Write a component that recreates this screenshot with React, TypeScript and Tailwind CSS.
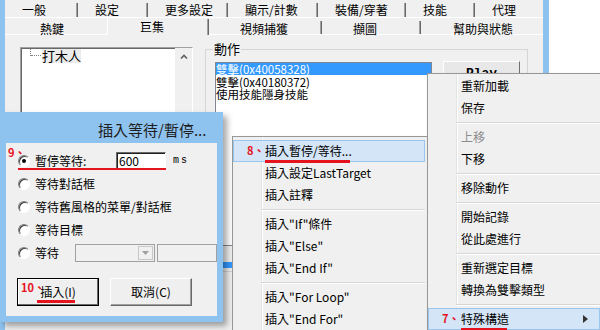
import React from 'react';

type MenuItem = { t?: string; sep?: boolean; hl?: boolean; mark?: string; dis?: boolean; sub?: boolean };

const topTabs = [
  { t: '一般', c: 'w-[73px]', sep: true },
  { t: '設定', c: 'w-[70px]', sep: true },
  { t: '更多設定', c: 'w-[80px]', sep: true },
  { t: '顯示/計數', c: 'w-[90px]', sep: true },
  { t: '裝備/穿著', c: 'w-[88px]', sep: true },
  { t: '技能', c: 'w-[69px]', sep: true },
  { t: '代理', c: 'w-[68px]', sep: false },
];

const bottomTabs = [
  { t: '熱鍵', c: 'w-[102px] pl-[35px] pt-[3px] border-b border-white', sep: false },
  { t: '巨集', c: 'w-[102px] pl-[32px] pt-[1px] border-l border-white', sep: true },
  { t: '視頻捕獲', c: 'w-[113px] pl-[31px] pt-[3px] border-b border-white', sep: true },
  { t: '擷圖', c: 'w-[99px] pl-[31px] pt-[3px] border-b border-white', sep: true },
  { t: '幫助與狀態', c: 'w-[122px] pl-[32px] pt-[3px] border-b border-white', sep: false },
];

const middleMenu: MenuItem[] = [
  { t: '插入暫停/等待...', hl: true, mark: '8、' },
  { t: '插入設定LastTarget' },
  { t: '插入註釋' },
  { sep: true },
  { t: '插入"If"條件' },
  { t: '插入"Else"' },
  { t: '插入"End If"' },
  { sep: true },
  { t: '插入"For Loop"' },
  { t: '插入"End For"' },
];

const rightMenu: MenuItem[] = [
  { t: '重新加載' },
  { t: '保存' },
  { sep: true },
  { t: '上移', dis: true },
  { t: '下移' },
  { sep: true },
  { t: '移除動作' },
  { sep: true },
  { t: '開始記錄' },
  { t: '從此處進行' },
  { sep: true },
  { t: '重新選定目標' },
  { t: '轉換為雙擊類型' },
  { sep: true },
  { t: '特殊構造', hl: true, mark: '7、', sub: true },
];

function TabSep() {
  return <span className="ml-auto h-full w-[2px] shrink-0 border-l border-[#a0a0a0] bg-[#696969]" />;
}

function Radio({ on }: { on?: boolean }) {
  return (
    <span className="flex h-[12px] w-[12px] shrink-0 items-center justify-center rounded-full border border-b-white border-l-[#808080] border-r-white border-t-[#808080] bg-white shadow-[inset_1px_1px_0_#404040]">
      {on && <span className="h-[4px] w-[4px] rounded-full bg-black" />}
    </span>
  );
}

function Menu({ items, className, pad }: { items: MenuItem[]; className: string; pad: string }) {
  return (
    <div className={`absolute border border-[#979797] bg-[#f0f0f0] pr-[2px] text-[12px] shadow-[3px_3px_4px_rgba(0,0,0,0.3)] ${className}`}>
      {/* icon gutter */}
      <div className="absolute bottom-0 left-[28px] top-0 w-[2px] border-l border-[#e2e3e3] bg-white" />
      {items.map((it, i) =>
        it.sep ? (
          <div key={i} className="relative flex h-[7px] items-center pl-[28px]">
            <div className="h-[2px] flex-1 border-t border-[#d7d7d7] bg-white" />
          </div>
        ) : (
          <div
            key={i}
            className={`relative flex h-[22px] items-center leading-[22px] ${pad} ${
              it.hl ? 'bg-[#d3e5f7] shadow-[inset_0_0_0_1px_#99c6ee]' : ''
            } ${it.dis ? 'text-[#8d8d8d]' : 'text-black'}`}
          >
            {it.mark && (
              <span className="absolute left-[14px] top-[3px] text-[11px] font-bold leading-[14px] text-[#e5131d]">
                {it.mark}
              </span>
            )}
            <span className="relative whitespace-nowrap">
              {it.t}
              {it.hl && <span className="absolute -bottom-[1px] left-0 right-[2px] h-[3px] bg-[#e5131d]" />}
            </span>
            {it.sub && (
              <svg className="absolute right-[12px] top-[7px]" width="5" height="8" viewBox="0 0 5 8">
                <polygon points="0,0 5,4 0,8" fill="#333" />
              </svg>
            )}
          </div>
        )
      )}
    </div>
  );
}

export default function App() {
  return (
    <div className="relative h-[330px] w-[600px] overflow-hidden bg-white font-['Noto_Sans_CJK_TC',sans-serif] text-[12px] text-black">
      {/* main window */}
      <div className="flex h-full w-[549px]">
        <div className="w-[5px] bg-[#8fc3ef]" />
        <div className="flex w-[538px] flex-col bg-[#f0f0f0]">
          <div className="flex h-[17px]">
            {topTabs.map((tab) => (
              <div key={tab.t} className={`flex h-full pl-[17px] pt-[3px] ${tab.c}`}>
                <span className="leading-[14px]">{tab.t}</span>
                {tab.sep && <TabSep />}
              </div>
            ))}
          </div>
          <div className="flex h-[18px] border-t border-white">
            {bottomTabs.map((tab) => (
              <div key={tab.t} className={`flex h-full ${tab.c}`}>
                <span className="leading-[15px]">{tab.t}</span>
                {tab.sep && <TabSep />}
              </div>
            ))}
          </div>

          <div className="flex items-start gap-[12px] pl-[15px] pt-[12px]">
            {/* tree */}
            <div className="flex h-[250px] w-[173px] border border-b-white border-l-[#a0a0a0] border-r-white border-t-[#a0a0a0] bg-white shadow-[inset_1px_1px_0_#696969]">
              <div className="relative flex-1">
                <div className="absolute left-[9px] top-[1px] h-[7px] border-l border-dotted border-[#808080]" />
                <div className="absolute left-[10px] top-[7px] w-[10px] border-t border-dotted border-[#808080]" />
                <span className="absolute left-[21px] top-[1px] bg-[#ececec] text-[13px] leading-[14px]">打木人</span>
              </div>
              <div className="flex w-[17px] justify-center bg-[#f0f0f0] pt-[6px]">
                <svg width="8" height="5" viewBox="0 0 8 5">
                  <path d="M1 4.5 L4 1.5 L7 4.5" stroke="#606060" strokeWidth="1.6" fill="none" />
                </svg>
              </div>
            </div>

            {/* action group */}
            <div className="relative mt-[2px] h-[223px] w-[323px] border border-[#d5d5d5]">
              <span className="absolute -top-[9px] left-[7px] bg-[#f0f0f0] px-[1px] text-[13px] leading-[15px]">動作</span>
              <div className="flex items-start pl-[9px] pt-[12px]">
                <div className="flex flex-col gap-[16px]">
                  <div className="h-[184px] w-[217px] border border-[#828790] bg-white text-[11.5px]">
                    <div className="h-[12px] bg-[#3399ff] leading-[12px] text-white">雙擊(0x40058328)</div>
                    <div className="mt-[1px] h-[12px] leading-[12px]">雙擊(0x40180372)</div>
                    <div className="h-[13px] leading-[13px]">使用技能隱身技能</div>
                  </div>
                  <div className="h-[6px] w-[217px] bg-[#3399ff]" />
                </div>
                <button className="-mt-[1px] ml-[11px] h-[25px] w-[77px] border border-b-[#707070] border-l-white border-r-[#707070] border-t-white bg-[#e8e8e8] pt-[1px] font-['Liberation_Mono',monospace] text-[13px] font-bold leading-[14px]">
                  Play
                </button>
              </div>
            </div>
          </div>
        </div>
        <div className="w-[6px] bg-[#8fc3ef]" />
      </div>

      {/* insert wait dialog */}
      <div className="absolute left-0 top-[112px] flex h-[210px] w-[223px] flex-col bg-[#8fc3ef] shadow-[4px_4px_6px_rgba(0,0,0,0.35)]">
        <div className="h-[31px] whitespace-nowrap pl-[98px] pt-[8px] text-[15px] leading-[20px] text-[#1e1e1e]">插入等待/暫停...</div>
        <div className="relative mx-[6px] h-[173px] overflow-hidden bg-[#f0f0f0] pt-[6px]">
          <div className="flex h-[23px] items-center pl-[12px]">
            <Radio on />
            <span className="ml-[5px] w-[81px]">暫停等待:</span>
            <span className="flex h-[17px] w-[50px] items-center border border-b-white border-l-[#696969] border-r-white border-t-[#696969] bg-white pl-[2px] shadow-[inset_1px_1px_0_#202020]">
              600
            </span>
            <span className="ml-[7px] font-['Liberation_Mono',monospace] text-[10px] tracking-[2px]">ms</span>
          </div>
          <div className="flex h-[23px] items-center pl-[12px]">
            <Radio />
            <span className="ml-[5px]">等待對話框</span>
          </div>
          <div className="flex h-[23px] items-center pl-[12px]">
            <Radio />
            <span className="ml-[5px] whitespace-nowrap">等待舊風格的菜單/對話框</span>
          </div>
          <div className="flex h-[23px] items-center pl-[12px]">
            <Radio />
            <span className="ml-[5px]">等待目標</span>
          </div>
          <div className="flex h-[23px] items-center pl-[12px]">
            <Radio />
            <span className="ml-[5px] w-[66px]">等待</span>
            <span className="flex h-[18px] w-[80px] shrink-0 justify-end border border-[#a0a0a0] bg-[#f0f0f0] p-[1px]">
              <span className="flex w-[15px] items-center justify-center border border-[#c8c8c8] bg-[#f0f0f0]">
                <svg width="7" height="4" viewBox="0 0 7 4">
                  <polygon points="0,0 7,0 3.5,4" fill="#a0a0a0" />
                </svg>
              </span>
            </span>
            <span className="ml-[2px] h-[18px] w-[60px] shrink-0 border border-[#a0a0a0] bg-[#f0f0f0]" />
          </div>

          <div className="mt-[14px] flex gap-[11px] pl-[11px]">
            <button className="relative h-[28px] w-[82px] border border-black bg-[#efefef] shadow-[inset_-1px_-1px_0_#696969,inset_1px_1px_0_#fff]">
              <span className="relative">
                插入(I)
                <span className="absolute -bottom-[3px] -left-[3px] right-[1px] h-[3px] bg-[#e5131d]" />
              </span>
              <span className="absolute left-[3px] top-[2px] text-[11px] font-bold leading-[12px] text-[#e5131d]">10、</span>
            </button>
            <button className="h-[28px] w-[82px] border border-b-[#696969] border-l-white border-r-[#696969] border-t-white bg-[#efefef] shadow-[inset_-1px_-1px_0_#a0a0a0]">
              取消(C)
            </button>
          </div>

          {/* annotation 9 */}
          <span className="absolute left-[2px] top-[3px] text-[11px] font-bold leading-[12px] text-[#e5131d]">9、</span>
          <span className="absolute left-[12px] top-[25px] h-[2px] w-[148px] bg-[#e5131d]" />
        </div>
      </div>

      <Menu items={middleMenu} className="left-[232px] top-[136px] h-[200px] w-[196px] pt-[3px]" pad="pl-[32px]" />
      <Menu items={rightMenu} className="left-[427px] top-[73px] h-[262px] w-[176px] pt-[1px]" pad="pl-[33px]" />
    </div>
  );
}
